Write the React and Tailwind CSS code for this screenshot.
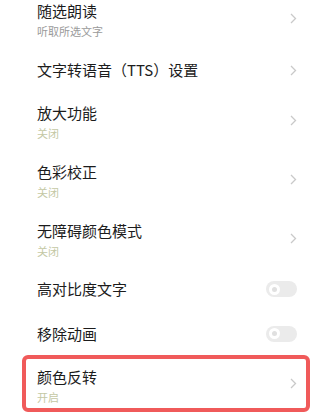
import React from 'react';

const font = { fontFamily: '"Noto Sans CJK SC", "Noto Sans", sans-serif' };

function Chevron() {
    return (
        <svg width="7" height="11" viewBox="0 0 7 11" className="shrink-0">
            <path d="M1 1 L5.5 5.5 L1 10" fill="none" stroke="#c9c9c9" strokeWidth="1.3" />
        </svg>
    );
}

function Toggle() {
    return (
        <div className="w-[31px] h-[16px] rounded-full bg-[#ebebeb] flex items-center pl-[3px] shrink-0">
            <div className="w-[11px] h-[11px] rounded-full bg-white flex items-center justify-center">
                <div className="w-[5px] h-[5px] rounded-full bg-[#e0e0e0]" />
            </div>
        </div>
    );
}

function Row({ title, sub, subColor, toggle, height, className = '' }) {
    return (
        <div className={`flex items-center justify-between ${height} ${className}`}>
            <div className={`flex flex-col ${sub ? 'mt-[6px]' : ''}`}>
                <span className="text-[15px] leading-[20px] text-[#1c1c1c]">{title}</span>
                {sub && (
                    <span className={`text-[11px] leading-[20px] ${subColor}`}>{sub}</span>
                )}
            </div>
            {toggle ? <Toggle /> : <Chevron />}
        </div>
    );
}

export default function App() {
    return (
        <div className="w-[317px] h-[417px] bg-white overflow-hidden" style={font}>
            <div className="-mt-[11px]">
                <Row title="随选朗读" sub="听取所选文字" subColor="text-[#9a9a9a]" height="h-[58px]" className="pl-[37px] pr-[20px]" />
                <Row title="文字转语音（TTS）设置" height="h-[46px]" className="pl-[37px] pr-[20px]" />
                <Row title="放大功能" sub="关闭" subColor="text-[#c4c8a4]" height="h-[54px]" className="pl-[37px] pr-[20px]" />
                <Row title="色彩校正" sub="关闭" subColor="text-[#c4c8a4]" height="h-[64px]" className="pl-[37px] pr-[20px]" />
                <Row title="无障碍颜色模式" sub="关闭" subColor="text-[#c4c8a4]" height="h-[54px]" className="pl-[37px] pr-[20px]" />
                <Row title="高对比度文字" toggle height="h-[48px]" className="pl-[37px] pr-[20px]" />
                <Row title="移除动画" toggle height="h-[41px]" className="pl-[37px] pr-[20px]" />
                <div className="ml-[22px] mr-[7px] mt-[1px] border-4 border-[#f05a5a] rounded-[6px]">
                    <Row title="颜色反转" sub="开启" subColor="text-[#c4c8a4]" height="h-[49px]" className="pl-[11px] pr-[9px]" />
                </div>
            </div>
        </div>
    );
}
